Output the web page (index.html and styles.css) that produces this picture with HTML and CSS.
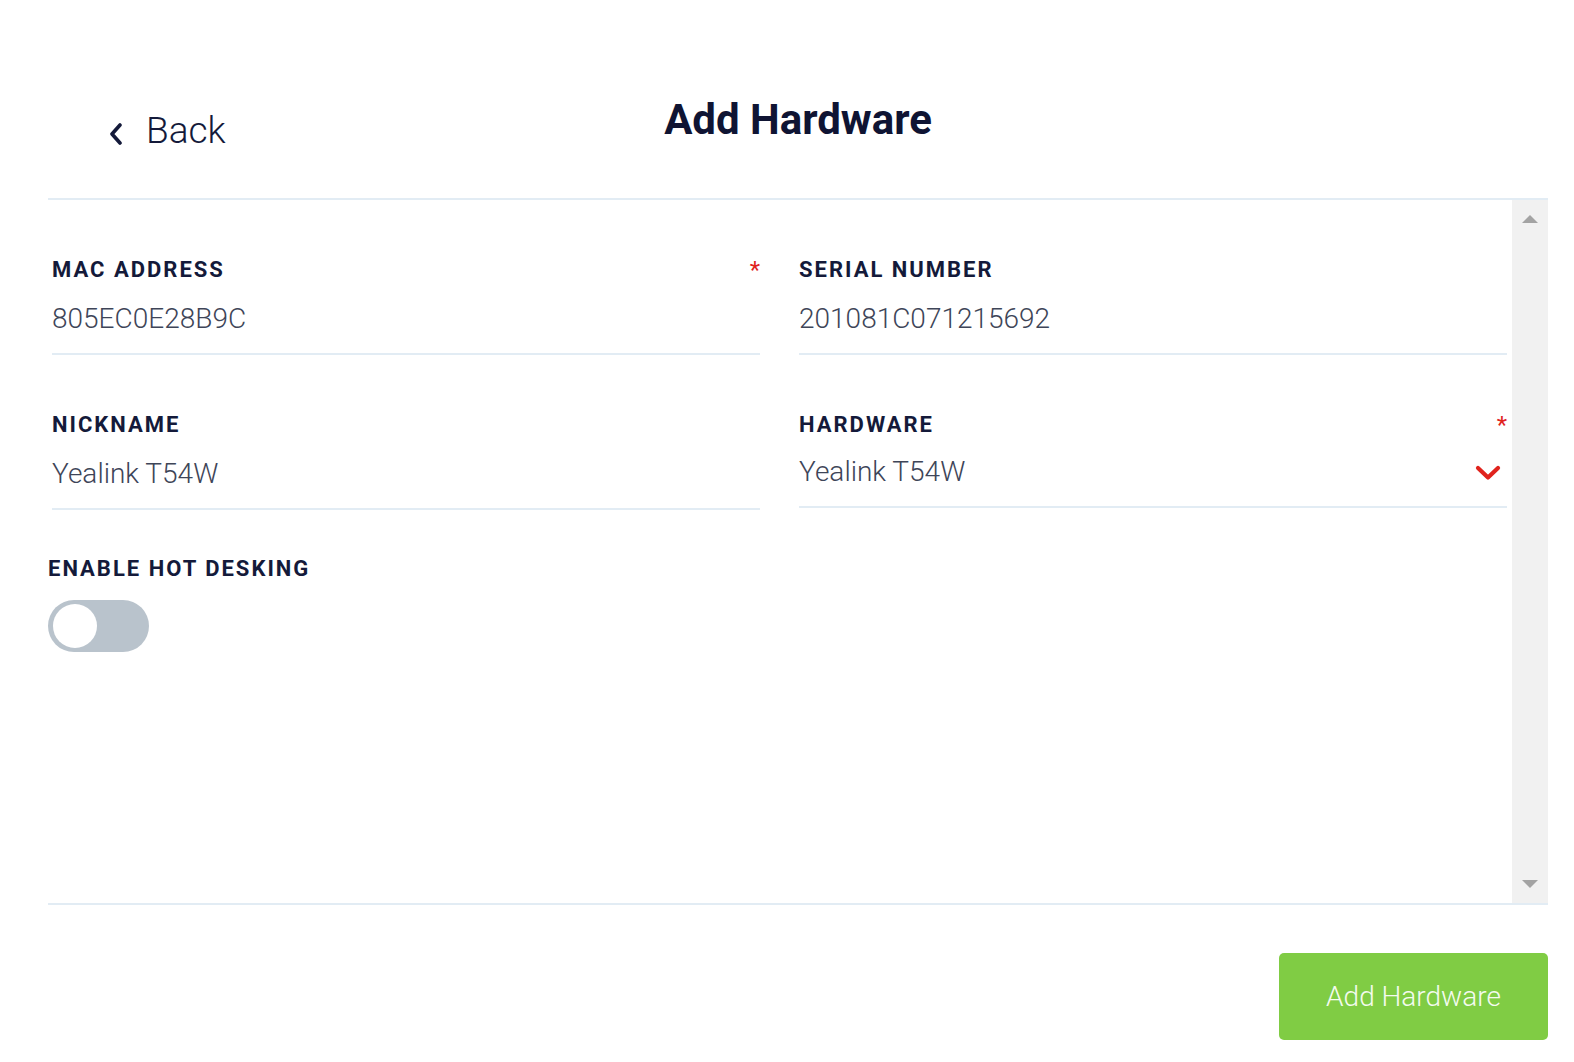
FILE: index.html
```html
<!DOCTYPE html>
<html lang="en">
<head>
<meta charset="utf-8">
<title>Add Hardware</title>
<link rel="stylesheet" href="styles.css">
</head>
<body>
<div class="page">
  <header class="header">
    <a class="back" href="#">
      <svg class="back-icon" width="16" height="22" viewBox="0 0 16 22" aria-hidden="true"><path d="M12 2 L4 11 L12 20" fill="none" stroke="#141a3a" stroke-width="3.6" stroke-linecap="round" stroke-linejoin="round"/></svg>
      <span>Back</span>
    </a>
    <h1 class="title">Add Hardware</h1>
    <div></div>
  </header>

  <section class="panel">
    <div class="form">
      <div class="grid">
        <div class="field">
          <div class="label">MAC ADDRESS</div>
          <span class="req">*</span>
          <div class="value">805EC0E28B9C</div>
        </div>
        <div class="field">
          <div class="label">SERIAL NUMBER</div>
          <div class="value">201081C071215692</div>
        </div>
        <div class="field">
          <div class="label">NICKNAME</div>
          <div class="value">Yealink T54W</div>
        </div>
        <div class="field field-select">
          <div class="label">HARDWARE</div>
          <span class="req">*</span>
          <div class="value select-row">
            <span>Yealink T54W</span>
            <svg class="chev" width="26" height="16" viewBox="0 0 26 16" aria-hidden="true"><path d="M3 3 L13 12.5 L23 3" fill="none" stroke="#e0231d" stroke-width="4.2" stroke-linecap="round" stroke-linejoin="round"/></svg>
          </div>
        </div>
      </div>
      <div class="hot">
        <div class="label">ENABLE HOT DESKING</div>
        <div class="toggle"><div class="knob"></div></div>
      </div>
    </div>
    <div class="scrollbar">
      <span class="tri tri-up"></span>
      <span class="tri tri-down"></span>
    </div>
  </section>

  <div class="actions">
    <button class="btn" type="button">Add Hardware</button>
  </div>
</div>
</body>
</html>
```

FILE: styles.css
```css
* { box-sizing: border-box; }
html, body { margin: 0; padding: 0; background: #ffffff; }
body { font-family: Roboto, "Noto Sans", "Liberation Sans", sans-serif; color: #141a3a; }

.page { width: 1500px; margin-left: 48px; }

.header {
  height: 198px;
  display: grid;
  grid-template-columns: 1fr auto 1fr;
  align-items: start;
}
.back {
  display: flex;
  align-items: center;
  gap: 22px;
  margin-top: 109px;
  padding-left: 60px;
  color: #141a3a;
  text-decoration: none;
  font-size: 37px;
  font-weight: 300;
  line-height: 44px;
  justify-self: start;
}
.back-icon { margin-top: 5px; }
.title {
  margin: 95px 0 0;
  font-size: 42px;
  line-height: 50px;
  font-weight: 700;
  color: #0f1433;
}

.panel {
  display: flex;
  height: 707px;
  border-top: 2px solid #e2ecf4;
  border-bottom: 2px solid #e2ecf4;
}
.form { flex: 1; padding-top: 57px; }
.grid {
  display: grid;
  grid-template-columns: 708px 708px;
  column-gap: 39px;
  row-gap: 57px;
  padding-left: 4px;
  align-items: start;
}
.field {
  position: relative;
  border-bottom: 2px solid #e2ecf4;
  padding-bottom: 16px;
}
.label {
  font-size: 22px;
  line-height: 26px;
  font-weight: 700;
  letter-spacing: 2px;
  color: #141a3a;
}
.value {
  margin-top: 18px;
  font-size: 28px;
  line-height: 36px;
  font-weight: 300;
  color: #3e4558;
}
.field-select .value { margin-top: 16px; }
.select-row {
  display: flex;
  align-items: center;
  justify-content: space-between;
}
.chev { margin-right: 6px; margin-top: 2px; }
.req {
  position: absolute;
  top: 0;
  right: 0;
  font-size: 24px;
  line-height: 26px;
  color: #e0231d;
}

.hot { margin-top: 46px; }
.toggle {
  margin-top: 18px;
  width: 101px;
  height: 52px;
  border-radius: 26px;
  background: #b9c3cc;
  padding: 4px 5px;
}
.knob {
  width: 44px;
  height: 44px;
  border-radius: 50%;
  background: #ffffff;
}

.scrollbar {
  width: 36px;
  background: #f1f1f1;
  display: flex;
  flex-direction: column;
  justify-content: space-between;
  align-items: center;
  padding: 15px 0 15px;
}
.tri { width: 0; height: 0; border-left: 8.5px solid transparent; border-right: 8.5px solid transparent; }
.tri-up { border-bottom: 8px solid #a3a3a3; }
.tri-down { border-top: 8px solid #a3a3a3; }

.actions { display: flex; justify-content: flex-end; margin-top: 48px; }
.btn {
  width: 269px;
  height: 87px;
  border: 0;
  border-radius: 5px;
  background: #80cc44;
  color: #f4fbef;
  font-family: Roboto, "Noto Sans", "Liberation Sans", sans-serif;
  font-size: 28px;
  font-weight: 300;
  cursor: pointer;
}
```
